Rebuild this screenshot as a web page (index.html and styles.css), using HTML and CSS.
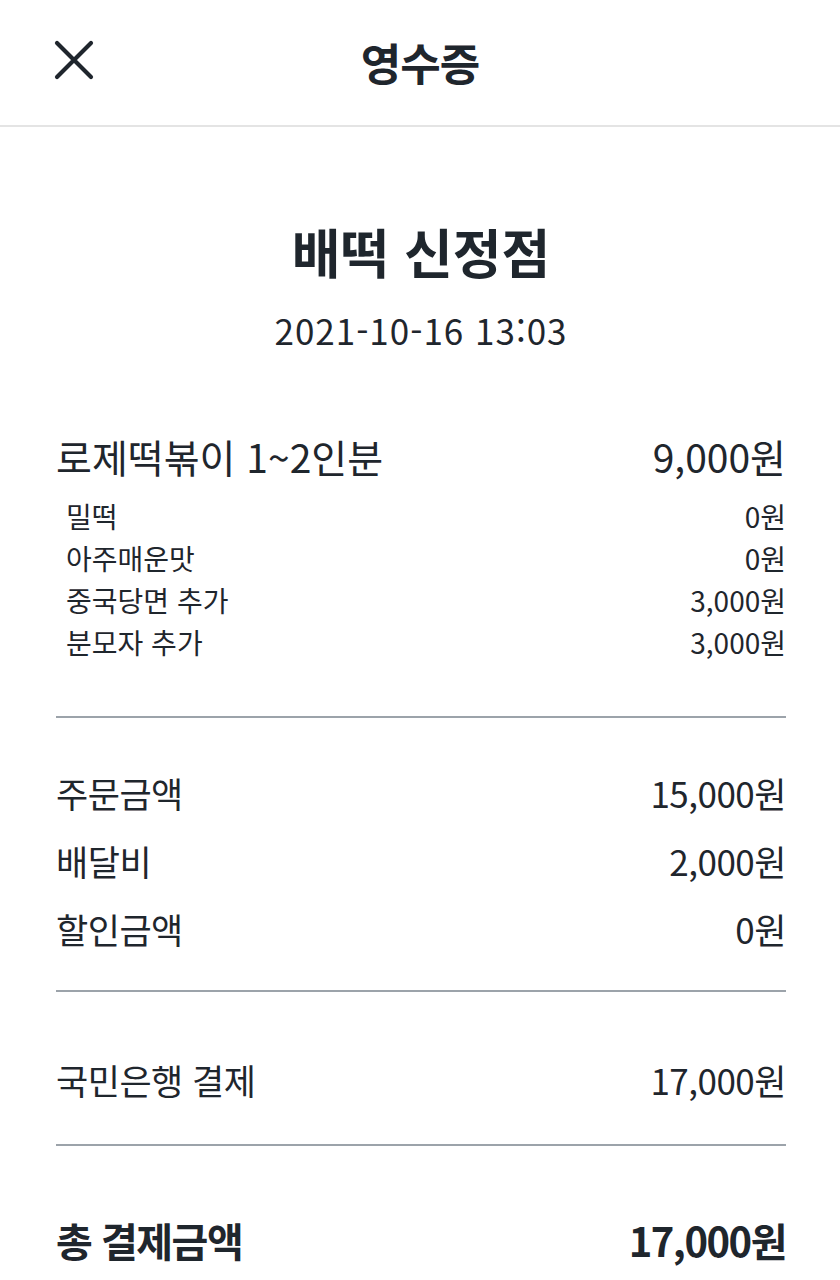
FILE: index.html
```html
<!DOCTYPE html>
<html lang="ko">
<head>
<meta charset="utf-8">
<title>영수증</title>
<link rel="stylesheet" href="styles.css">
</head>
<body>
<header class="topbar">
  <button class="close" aria-label="닫기">
    <svg width="40" height="40" viewBox="0 0 40 40"><path d="M3 3 L37 37 M37 3 L3 37" stroke="#1f262d" stroke-width="4.2" stroke-linecap="round" fill="none"/></svg>
  </button>
  <h1 class="title">영수증</h1>
</header>
<main class="receipt">
  <section class="store">
    <h2 class="store-name">배떡 신정점</h2>
    <p class="store-date">2021-10-16 13:03</p>
  </section>
  <section class="items">
    <div class="row item"><span>로제떡볶이 1~2인분</span><span>9,000원</span></div>
    <div class="row option"><span>밀떡</span><span>0원</span></div>
    <div class="row option"><span>아주매운맛</span><span>0원</span></div>
    <div class="row option"><span>중국당면 추가</span><span>3,000원</span></div>
    <div class="row option"><span>분모자 추가</span><span>3,000원</span></div>
  </section>
  <section class="summary">
    <div class="row sum"><span>주문금액</span><span>15,000원</span></div>
    <div class="row sum"><span>배달비</span><span>2,000원</span></div>
    <div class="row sum"><span>할인금액</span><span>0원</span></div>
  </section>
  <section class="payment">
    <div class="row sum"><span>국민은행 결제</span><span>17,000원</span></div>
  </section>
  <section class="total">
    <div class="row grand"><span>총 결제금액</span><span>17,000원</span></div>
  </section>
</main>
</body>
</html>
```
FILE: styles.css
```css
* { box-sizing: border-box; }
html, body { margin: 0; padding: 0; background: #fff; }
body {
  font-family: "Noto Sans CJK KR", "Noto Sans", sans-serif;
  color: #1f262d;
  width: 840px;
}
.topbar {
  position: relative;
  height: 127px;
  border-bottom: 2px solid #e4e4e4;
  display: flex;
  align-items: center;
  justify-content: center;
}
.close {
  position: absolute;
  left: 54px;
  top: 40px;
  width: 40px;
  height: 40px;
  padding: 0;
  border: 0;
  background: none;
  display: flex;
}
.title {
  margin: 0;
  font-size: 44px;
  font-weight: 700;
  letter-spacing: -1px;
  line-height: 1;
  padding-bottom: 2px;
}
.receipt {
  padding: 0 54px 0 56px;
}
.store {
  text-align: center;
  padding-top: 88px;
  padding-bottom: 75px;
}
.store-name {
  margin: 0;
  font-size: 53px;
  font-weight: 700;
  line-height: 72px;
  letter-spacing: 0;
}
.store-date {
  margin: 21px 0 0;
  font-size: 35px;
  line-height: 44px;
  font-weight: 400;
  letter-spacing: 1px;
}
.row {
  display: flex;
  justify-content: space-between;
  align-items: center;
}
.items {
  padding-bottom: 53px;
  border-bottom: 2px solid #9ca3aa;
}
.item {
  font-size: 39px;
  height: 58px;
  margin-bottom: 10px;
  letter-spacing: 0;
}
.option {
  font-size: 28px;
  height: 42px;
  padding-left: 10px;
}
.summary {
  padding: 40px 0 28px;
  border-bottom: 2px solid #9ca3aa;
}
.sum {
  font-size: 35px;
  height: 68px;
  letter-spacing: -0.5px;
}
.payment {
  padding: 53px 0 31px;
  border-bottom: 2px solid #9ca3aa;
}
.total {
  padding-top: 60px;
}
.grand {
  font-size: 40px;
  font-weight: 700;
  height: 68px;
  letter-spacing: -1.5px;
}
```
